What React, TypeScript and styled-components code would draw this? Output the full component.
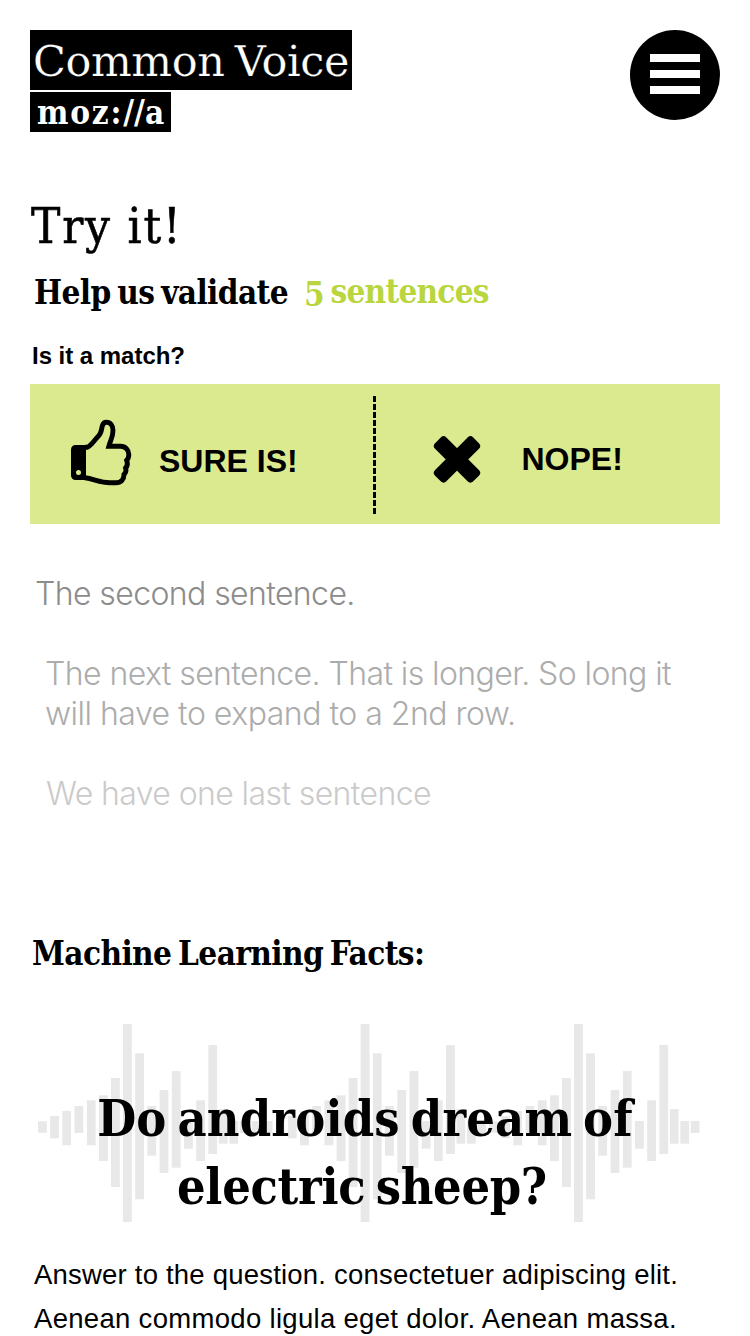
import React from "react";
import styled, { createGlobalStyle } from "styled-components";

const slab = `"DejaVu Serif Condensed", "DejaVu Serif", serif`;
const sans = `"Liberation Sans", Arial, sans-serif`;

const GlobalStyle = createGlobalStyle`
  * { box-sizing: border-box; }
  body { margin: 0; background: #fff; color: #000; font-family: ${sans}; }
  h1, h2, h3, p { margin: 0; }
`;

const Page = styled.main`
  width: 750px;
  height: 1336px;
  padding: 30px 30px 0;
  overflow: hidden;
`;

const Header = styled.header`
  display: flex;
  justify-content: space-between;
  align-items: flex-start;
`;

const Brand = styled.div`
  display: flex;
  flex-direction: column;
  align-items: flex-start;
  gap: 2px;
  color: #fff;
  white-space: nowrap;
`;

const ProductName = styled.div`
  width: 322px;
  height: 60px;
  padding: 1px 0 0 3px;
  background: #000;
  font: 400 43px/60px "DejaVu Serif", serif;
  letter-spacing: -0.4px;
  word-spacing: -3px;
  -webkit-text-stroke: 0.25px #000;
`;

const MozillaMark = styled.div`
  width: 141px;
  height: 40px;
  padding-left: 7px;
  background: #000;
  font: 700 33px/41px ${slab};
  letter-spacing: 1.8px;
`;

const Slashes = styled.span`
  letter-spacing: 0;
`;

const MenuButton = styled.button`
  display: flex;
  flex-direction: column;
  align-items: center;
  justify-content: center;
  gap: 8px;
  width: 90px;
  height: 90px;
  padding: 0 0 2px;
  border: 0;
  border-radius: 50%;
  background: #000;
`;

const MenuBar = styled.span`
  width: 50px;
  height: 8px;
  background: #fff;
`;

const Title = styled.h1`
  margin-top: 65px;
  padding-left: 1px;
  font: 400 49px/60px ${slab};
  letter-spacing: 1.8px;
  -webkit-text-stroke: 0.6px #000;
`;

const Task = styled.h2`
  display: flex;
  align-items: flex-start;
  height: 40px;
  margin-top: 15px;
  padding-left: 4px;
  font: 700 33px/42px ${slab};
  letter-spacing: -0.6px;
  word-spacing: -3px;
  white-space: nowrap;
`;

const Count = styled.span`
  margin-left: 16px;
  color: #b9d63e;
  line-height: 39px;
  letter-spacing: -0.75px;
`;

const LowFigure = styled.span`
  vertical-align: -3px;
  line-height: 0;
`;

const Prompt = styled.p`
  margin-top: 29px;
  padding-left: 2px;
  font: 700 24px/30px ${sans};
  letter-spacing: -0.03px;
`;

const Answers = styled.div`
  display: flex;
  align-items: center;
  height: 140px;
  margin-top: 13px;
  background: #dbea8f;
`;

const Choice = styled.button<{ $width: number; $inset: number; $gap: number }>`
  display: flex;
  align-items: flex-start;
  gap: ${(p) => p.$gap}px;
  width: ${(p) => p.$width}px;
  height: 140px;
  padding: 0 0 0 ${(p) => p.$inset}px;
  border: 0;
  background: none;
  color: #000;
`;

const ChoiceIcon = styled.svg<{ $top: number }>`
  flex: none;
  margin-top: ${(p) => p.$top}px;
`;

const ChoiceLabel = styled.span<{ $top: number }>`
  margin-top: ${(p) => p.$top}px;
  font: 700 32px/40px ${sans};
`;

const Divider = styled.div`
  width: 3px;
  height: 118px;
  margin-top: 2px;
  background: repeating-linear-gradient(#000 0 6px, transparent 6px 8px);
`;

const Queue = styled.div`
  display: flex;
  flex-direction: column;
  gap: 40px;
  margin-top: 50px;
`;

const Sentence = styled.p<{ $inset: number; $color: string }>`
  padding-left: ${(p) => p.$inset}px;
  color: ${(p) => p.$color};
  font: 300 32px/40px Inter, ${sans};
  letter-spacing: -0.6px;
  white-space: nowrap;
`;

const TextLine = styled.span<{ $spacing: number; $shift?: number }>`
  display: block;
  padding-right: ${(p) => p.$shift ?? 0}px;
  letter-spacing: ${(p) => p.$spacing}px;
`;

const FactsHeading = styled.h2`
  margin-top: 118px;
  padding-left: 2px;
  font: 700 33px/44px ${slab};
  letter-spacing: -0.6px;
  word-spacing: -3px;
`;

const Fact = styled.section`
  display: grid;
  height: 198px;
  margin-top: 48px;

  > * { grid-area: 1 / 1; }
`;

const Question = styled.h3`
  z-index: 1;
  padding: 61px 20px 0 0;
  font: 700 50px/68px ${slab};
  word-spacing: -5px;
  text-align: center;
  white-space: nowrap;
`;

const Answer = styled.p`
  margin-top: 31px;
  padding-left: 4px;
  font: 400 27.5px/44px ${sans};
  white-space: nowrap;
`;

const ThumbIcon = () => (
  <ChoiceIcon $top={28} width="76" height="80" viewBox="0 0 76 80" fill="none">
    <path
      fillRule="evenodd"
      fill="#000"
      d="M13.5 33H24v35H13.5a4.5 4.5 0 0 1-4.5-4.5v-26A4.5 4.5 0 0 1 13.5 33zM16.5 58a2.5 2.5 0 1 0 0 5a2.5 2.5 0 0 0 0-5z"
    />
    <path
      d="M23 35.3h2.5C29 34 33 27.500 36.500 24C39.500 21 39.500 17 40.300 14C41.200 11 42.600 10.300 44.300 10.300C48.500 10.300 51 13.500 51 18.500C51 25 48.500 28 46.800 34.300H58.500C63.500 34.300 66.800 38 66.800 42.500C66.800 45.500 66 47 64.700 48.300C66 51.500 65.500 54 63.600 56C64.500 59 63.800 61 62 62.500C62 67.500 59 70.700 54 70.700H48C38 70.700 32 67 23 65.800"
      stroke="#000"
      strokeWidth="4.900"
      strokeLinejoin="miter"
    />
  </ChoiceIcon>
);

const CrossIcon = () => (
  <ChoiceIcon $top={51} width="48" height="48" viewBox="-24 -24 48 48">
    <g transform="translate(0 0.4) rotate(45)">
      <rect x="-27" y="-8" width="54" height="16" rx="4" />
      <rect x="-8" y="-27" width="16" height="54" rx="4" />
    </g>
  </ChoiceIcon>
);

type Bar = [x: number, top: number, bottom: number];

const burst: Bar[] = [
  [0, 97.3, 108.7], [12.2, 92, 114.3], [24.3, 87, 121.3], [36.5, 82, 109],
  [48.8, 76.3, 121.3], [61, 71.3, 137], [73, 54, 163], [85, 0, 198],
  [97.2, 29.3, 175.3], [109.3, 82, 131.7], [121.6, 66, 149], [133.8, 47, 143.7],
  [146, 97, 124.7], [158.2, 76.3, 137], [170.3, 21, 130], [180.8, 85, 119.7],
  [191.3, 97, 119.7], [201.7, 97, 109],
];
const bridge: Bar[] = [[213.7, 97, 109], [225.7, 97, 109]];
const shift = (bars: Bar[], dx: number): Bar[] => bars.map(([x, t, b]) => [x + dx, t, b]);
const wave = [...burst, ...bridge, ...shift(burst, 237.7), ...shift(burst, 451)];

const Waveform = () => (
  <svg width="690" height="198" viewBox="0 0 690 198" fill="#e8e8e8">
    {wave.map(([x, top, bottom], i) => (
      <rect key={i} x={x + 8} y={top} width="8.800" height={bottom - top} />
    ))}
  </svg>
);

export default function App() {
  return (
    <Page>
      <GlobalStyle />
      <Header>
        <Brand>
          <ProductName>Common Voice</ProductName>
          <MozillaMark>moz:<Slashes>//</Slashes>a</MozillaMark>
        </Brand>
        <MenuButton aria-label="Menu">
          <MenuBar />
          <MenuBar />
          <MenuBar />
        </MenuButton>
      </Header>

      <Title>Try it!</Title>
      <Task>
        Help us validate
        <Count><LowFigure>5</LowFigure> sentences</Count>
      </Task>
      <Prompt>Is it a match?</Prompt>
      <Answers>
        <Choice $width={343} $inset={32} $gap={21}>
          <ThumbIcon />
          <ChoiceLabel $top={57}>SURE IS!</ChoiceLabel>
        </Choice>
        <Divider />
        <Choice $width={344} $inset={56.5} $gap={41}>
          <CrossIcon />
          <ChoiceLabel $top={55}>NOPE!</ChoiceLabel>
        </Choice>
      </Answers>

      <Queue>
        <Sentence $inset={5} $color="#8c8c8c">The second sentence.</Sentence>
        <Sentence $inset={15} $color="#acacac">
          <TextLine $spacing={-0.58}>The next sentence. That is longer. So long it</TextLine>
          <TextLine $spacing={-0.5}>will have to expand to a 2nd row.</TextLine>
        </Sentence>
        <Sentence $inset={16} $color="#cacaca">We have one last sentence</Sentence>
      </Queue>

      <FactsHeading>Machine Learning Facts:</FactsHeading>
      <Fact>
        <Waveform />
        <Question>
          <TextLine $spacing={0.2}>Do androids dream of</TextLine>
          <TextLine $spacing={-0.3} $shift={6}>electric sheep?</TextLine>
        </Question>
      </Fact>
      <Answer>
        <TextLine $spacing={0.21}>Answer to the question. consectetuer adipiscing elit.</TextLine>
        <TextLine $spacing={0.31}>Aenean commodo ligula eget dolor. Aenean massa.</TextLine>
      </Answer>
    </Page>
  );
}
